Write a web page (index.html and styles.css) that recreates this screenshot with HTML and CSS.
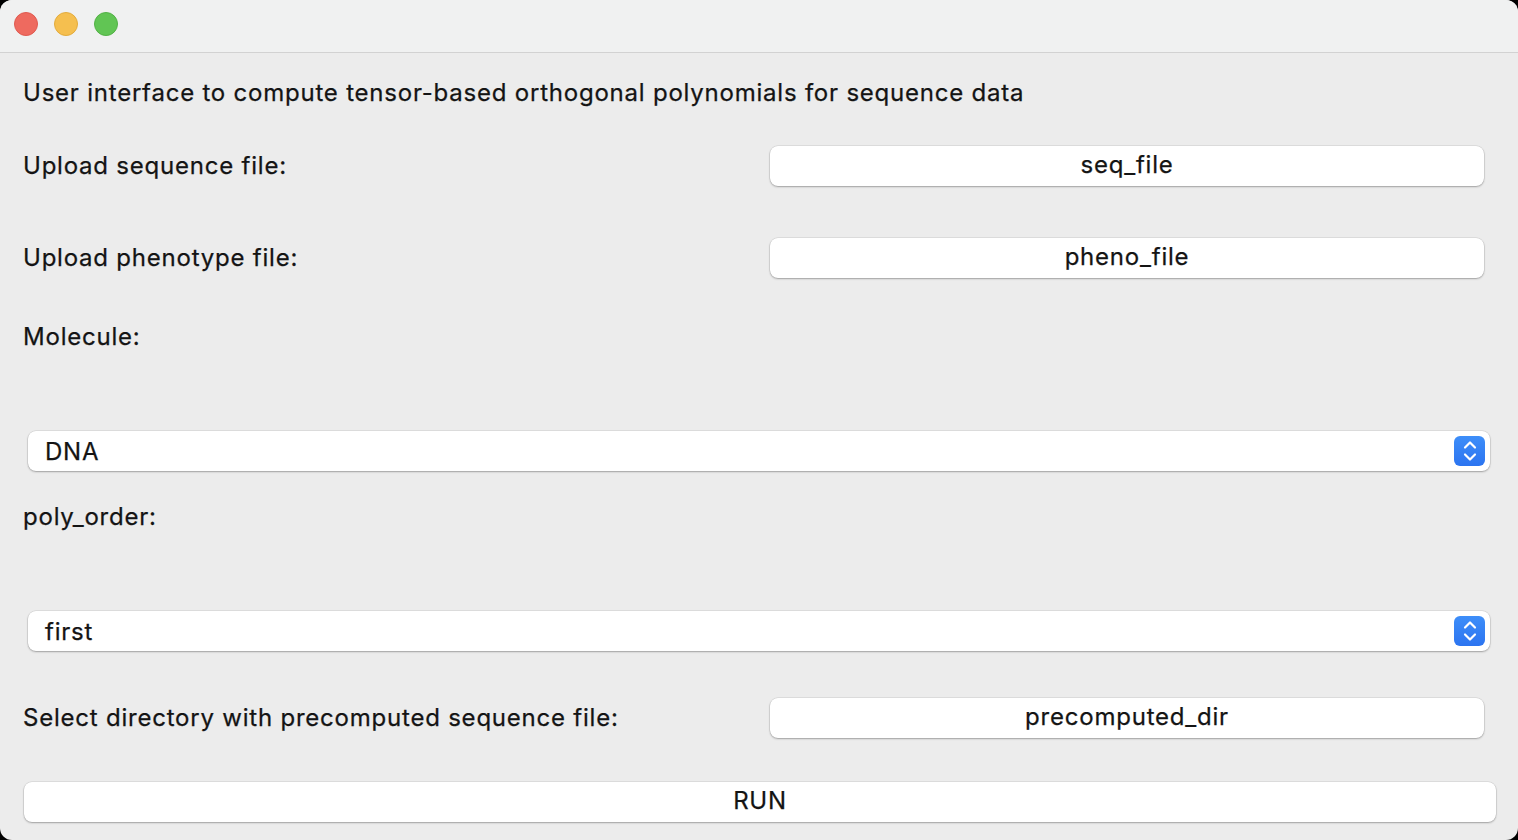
FILE: index.html
```html
<!DOCTYPE html>
<html lang="en">
<head>
<meta charset="utf-8">
<title>Tensor polynomials</title>
<link rel="stylesheet" href="styles.css">
</head>
<body>
<div class="window">
  <div class="titlebar">
    <span class="light red"></span>
    <span class="light yellow"></span>
    <span class="light green"></span>
  </div>
  <div class="content">
    <div class="heading">User interface to compute tensor-based orthogonal polynomials for sequence data</div>

    <div class="row row-seq">
      <span class="label">Upload sequence file:</span>
      <button class="btn">seq_file</button>
    </div>

    <div class="row row-pheno">
      <span class="label">Upload phenotype file:</span>
      <button class="btn">pheno_file</button>
    </div>

    <div class="label field-label molecule">Molecule:</div>
    <div class="select">
      <span class="select-text">DNA</span>
      <span class="stepper">
        <svg width="14" height="22" viewBox="0 0 14 22"><path d="M2 7.5 L7 2.5 L12 7.5" fill="none" stroke="#fff" stroke-width="2.2" stroke-linecap="round" stroke-linejoin="round"/><path d="M2 14.5 L7 19.5 L12 14.5" fill="none" stroke="#fff" stroke-width="2.2" stroke-linecap="round" stroke-linejoin="round"/></svg>
      </span>
    </div>

    <div class="label field-label poly">poly_order:</div>
    <div class="select">
      <span class="select-text">first</span>
      <span class="stepper">
        <svg width="14" height="22" viewBox="0 0 14 22"><path d="M2 7.5 L7 2.5 L12 7.5" fill="none" stroke="#fff" stroke-width="2.2" stroke-linecap="round" stroke-linejoin="round"/><path d="M2 14.5 L7 19.5 L12 14.5" fill="none" stroke="#fff" stroke-width="2.2" stroke-linecap="round" stroke-linejoin="round"/></svg>
      </span>
    </div>

    <div class="row row-dir">
      <span class="label">Select directory with precomputed sequence file:</span>
      <button class="btn">precomputed_dir</button>
    </div>

    <button class="btn run">RUN</button>
  </div>
</div>
</body>
</html>
```
FILE: styles.css
```css
* { box-sizing: border-box; }
html, body {
  margin: 0;
  padding: 0;
  background: #000;
  width: 1518px;
  height: 840px;
  overflow: hidden;
}
.window {
  width: 1518px;
  height: 840px;
  border-radius: 12px;
  overflow: hidden;
  background: #ececec;
  display: flex;
  flex-direction: column;
  font-family: "Inter", "Liberation Sans", sans-serif;
  font-weight: 400;
  letter-spacing: 0.78px;
  -webkit-text-stroke: 0.25px currentColor;
  color: #141414;
}
.titlebar {
  height: 53px;
  flex: none;
  background: #f0f1f1;
  border-bottom: 1px solid #d2d2d2;
  display: flex;
  align-items: flex-start;
  padding: 12px 0 0 14px;
  gap: 16px;
}
.light {
  width: 24px;
  height: 24px;
  border-radius: 50%;
  display: block;
}
.red { background: #ee6a5f; border: 1px solid #df5a50; }
.yellow { background: #f5bf4f; border: 1px solid #e2ab3d; }
.green { background: #61c554; border: 1px solid #52b146; }

.content {
  flex: 1;
  padding: 25px 22px 0 23px;
  display: flex;
  flex-direction: column;
}
.heading, .label {
  font-size: 24px;
  line-height: 30px;
  white-space: nowrap;
}
.row {
  display: grid;
  grid-template-columns: 1fr 714px;
  align-items: center;
  margin-right: 12px;
}
.row-seq { margin-top: 38px; }
.row-pheno { margin-top: 52px; }
.row-dir { margin-top: 47px; }
.btn {
  height: 40px;
  background: #fff;
  border: none;
  border-radius: 8px;
  box-shadow: 0 0 0 0.5px rgba(0,0,0,0.12), 0 1px 2px rgba(0,0,0,0.28);
  font-family: inherit;
  font-weight: inherit;
  letter-spacing: inherit;
  -webkit-text-stroke: inherit;
  font-size: 24px;
  color: #141414;
  padding: 0 0 3px;
}
.molecule { margin-top: 44px; }
.poly { margin-top: 31px; }
.select {
  margin: 79px 6px 0 5px;
  height: 40px;
  background: #fff;
  border-radius: 8px;
  box-shadow: 0 0 0 0.5px rgba(0,0,0,0.12), 0 1px 2px rgba(0,0,0,0.28);
  display: flex;
  align-items: center;
  justify-content: space-between;
  padding: 0 5px 0 17px;
}
.select-text { font-size: 24px; }
.stepper {
  width: 31px;
  height: 30px;
  border-radius: 6px;
  background: linear-gradient(#3d8ef9, #2c74f0);
  display: flex;
  align-items: center;
  justify-content: center;
  -webkit-text-stroke: 0;
}
.stepper svg { display: block; }
.run {
  margin: 44px 0 0 1px;
}
```
